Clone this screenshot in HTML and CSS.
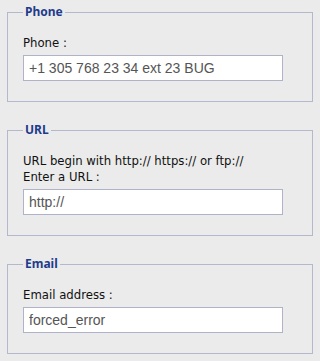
FILE: index.html
```html
<!DOCTYPE html>
<html>
<head>
<meta charset="utf-8">
<link rel="stylesheet" href="styles.css">
</head>
<body>
<form class="form">
  <fieldset class="group">
    <legend class="group-title">Phone</legend>
    <label class="field-label" for="phone">Phone :</label>
    <input class="field-input" id="phone" type="text" value="+1 305 768 23 34 ext 23 BUG">
  </fieldset>
  <fieldset class="group">
    <legend class="group-title">URL</legend>
    <div class="field-label">URL begin with http:// https:// or ftp://</div>
    <label class="field-label" for="url">Enter a URL :</label>
    <input class="field-input" id="url" type="text" value="http://">
  </fieldset>
  <fieldset class="group">
    <legend class="group-title">Email</legend>
    <label class="field-label" for="email">Email address :</label>
    <input class="field-input" id="email" type="text" value="forced_error">
  </fieldset>
</form>
</body>
</html>
```
FILE: styles.css
```css
html, body {
  margin: 0;
  background: #ebebeb;
}
body {
  padding: 4px 7px 0;
  font-family: "DejaVu Sans", Verdana, sans-serif;
  font-size: 11.7px;
  line-height: 16px;
  color: #111;
}
.form {
  display: flex;
  flex-direction: column;
  gap: 20px;
  margin: 0;
}
.group {
  margin: 0;
  border: 1px solid #b4b8cc;
  padding: 15px 15px 20px;
  display: flex;
  flex-direction: column;
  align-items: flex-start;
}
.group-title {
  padding: 0 2px;
  font-family: "Noto Sans", "DejaVu Sans", sans-serif;
  font-weight: bold;
  font-size: 12px;
  line-height: 16px;
  color: #1f3b8c;
}
.field-label {
  display: block;
}
.field-input {
  box-sizing: border-box;
  width: 260px;
  height: 26px;
  margin: 4px 0 0;
  padding: 0 5px;
  border: 1px solid #b0b3c8;
  background: #fff;
  font-family: "Liberation Sans", Arial, sans-serif;
  font-size: 14px;
  color: #555;
  outline: none;
}
```
